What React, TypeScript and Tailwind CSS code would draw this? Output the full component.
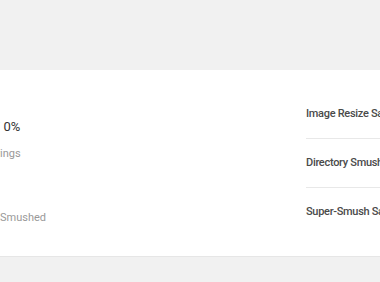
export default function App() {
  return (
    <div className="min-h-[282px] w-[380px] overflow-hidden bg-[#f1f1f1] pt-[70px] font-['Roboto',sans-serif]">
      <div className="flex h-[186px] bg-white shadow-[0_1px_0_#e6e6e6]">
        {/* left summary, cut by the window */}
        <div className="w-[306px] shrink-0 overflow-hidden">
          <div className="pt-[48px]">
            <div className="ml-[-27px] whitespace-nowrap text-[13px] leading-[18px] text-[#333]">0 B / 0%</div>
            <div className="ml-[-45px] mt-[10px] whitespace-nowrap text-[11px] leading-[16px] text-[#999]">Total Savings</div>
            <div className="ml-[-39px] mt-[48px] whitespace-nowrap text-[11px] leading-[16px] text-[#999]">Images Smushed</div>
          </div>
        </div>
        {/* right list */}
        <div className="w-[260px] shrink-0 pt-[20px]">
          {['Image Resize Savings', 'Directory Smush Savings', 'Super-Smush Savings'].map((t, i) => (
            <div
              key={t}
              className={
                'flex h-[49px] items-center whitespace-nowrap text-[11px] font-medium tracking-[-0.3px] text-[#4a4a4a] ' +
                (i < 2 ? 'border-b border-[#e8e8e8]' : '')
              }
            >
              {t}
            </div>
          ))}
        </div>
      </div>
    </div>
  );
}
